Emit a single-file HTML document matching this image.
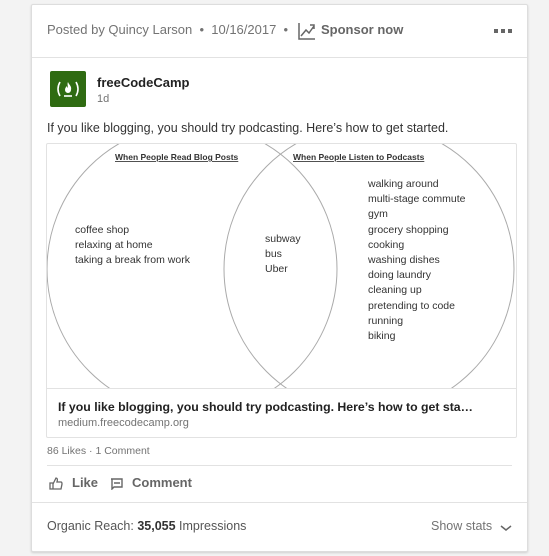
<!DOCTYPE html>
<html><head><style>
body{margin:0;background:#f3f3f3;font-family:"Liberation Sans",sans-serif;width:549px;height:556px;overflow:hidden;position:relative}
.card{position:absolute;left:31px;top:4px;width:497px;height:548px;background:#fff;border:1px solid #ddd;border-radius:2px;box-shadow:0 1px 2px rgba(0,0,0,.15);box-sizing:border-box}
.abs{position:absolute;white-space:nowrap}
.g{color:#737373}
</style></head><body>
<div class="card">
 <div class="abs g" style="left:15px;top:17px;font-size:13px">Posted by Quincy Larson &nbsp;•&nbsp; 10/16/2017 &nbsp;•&nbsp;</div>
 <svg class="abs" style="left:266px;top:17px" width="18" height="18" viewBox="0 0 18 18"><path d="M1 1v16h16M3 14l5-6 3 3 5-7M12 3h4v4" fill="none" stroke="#666" stroke-width="1.5"/></svg>
 <div class="abs" style="left:289px;top:17px;font-size:13px;font-weight:bold;color:#666">Sponsor now</div>
 <div class="abs" style="left:462px;top:24px;line-height:0"><span style="display:inline-block;width:4px;height:4px;background:#666;margin-right:3px"></span><span style="display:inline-block;width:4px;height:4px;background:#666;margin-right:3px"></span><span style="display:inline-block;width:4px;height:4px;background:#666"></span></div>
 <div class="abs" style="left:0;top:52px;width:495px;border-top:1px solid #e2e2e2"></div>
 <div class="abs" style="left:18px;top:66px;width:36px;height:36px;background:#2f6b12;border-radius:2px">
  <svg width="36" height="36" viewBox="0 0 36 36"><g fill="none" stroke="#fff" stroke-width="1.6"><path d="M10 11q-4 7 0 14M26 11q4 7 0 14"/><path d="M14 25h8"/></g><path d="M18 11c1 3 4 4 3 8a3 3 0 0 1-6 0c0-2 1-3 2-4 0 1 1 2 1 2 0-2-1-4 0-6z" fill="#fff"/></svg>
 </div>
 <div class="abs" style="left:65px;top:70px;font-size:13px;font-weight:bold;color:#222">freeCodeCamp</div>
 <div class="abs g" style="left:65px;top:88px;font-size:11px">1d</div>
 <div class="abs" style="left:15px;top:116px;font-size:12.5px;color:#333">If you like blogging, you should try podcasting. Here’s how to get started.</div>
 <div class="abs" style="left:14px;top:138px;width:469px;height:293px;border:1px solid #e2e2e2;border-radius:2px;overflow:hidden">
  <svg width="469" height="245" style="position:absolute;left:0;top:0">
   <circle cx="145" cy="125" r="145" fill="none" stroke="#aaa" stroke-width="1"/>
   <circle cx="322" cy="125" r="145" fill="none" stroke="#aaa" stroke-width="1"/>
   <g font-family="Liberation Sans,sans-serif" font-size="10.5" fill="#333">
   <text x="68" y="16" font-weight="bold" font-size="8.5" text-decoration="underline">When People Read Blog Posts</text>
   <text x="246" y="16" font-weight="bold" font-size="8.5" text-decoration="underline">When People Listen to Podcasts</text>
   <text x="28" y="89">coffee shop</text><text x="28" y="104">relaxing at home</text><text x="28" y="119">taking a break from work</text>
   <text x="218" y="98">subway</text><text x="218" y="113">bus</text><text x="218" y="128">Uber</text>
   <text x="321" y="43">walking around</text><text x="321" y="58">multi-stage commute</text><text x="321" y="73">gym</text><text x="321" y="89">grocery shopping</text><text x="321" y="104">cooking</text><text x="321" y="119">washing dishes</text><text x="321" y="134">doing laundry</text><text x="321" y="149">cleaning up</text><text x="321" y="165">pretending to code</text><text x="321" y="180">running</text><text x="321" y="195">biking</text>
   </g>
  </svg>
  <div class="abs" style="left:0;top:244px;width:469px;border-top:1px solid #e2e2e2"></div>
  <div class="abs" style="left:11px;top:256px;font-size:12.3px;font-weight:bold;color:#222">If you like blogging, you should try podcasting. Here’s how to get sta…</div>
  <div class="abs g" style="left:11px;top:273px;font-size:11px">medium.freecodecamp.org</div>
 </div>
 <div class="abs g" style="left:15px;top:440px;font-size:10.5px">86 Likes · 1 Comment</div>
 <div class="abs" style="left:15px;top:460px;width:465px;border-top:1px solid #e2e2e2"></div>
 <svg class="abs" style="left:17px;top:471px" width="14" height="14" viewBox="0 0 14 14"><path d="M1 7h3v6H1zM4 8l3-6c1 0 2 1 1 4h4c1 0 1 1 1 2l-1 5H4" fill="none" stroke="#666" stroke-width="1.3"/></svg>
 <div class="abs" style="left:40px;top:470px;font-size:13px;font-weight:bold;color:#666">Like</div>
 <svg class="abs" style="left:78px;top:473px" width="13" height="12" viewBox="0 0 13 12"><path d="M1 1h11v8H4l-2 2V1zM4 5h6" fill="none" stroke="#666" stroke-width="1.4"/></svg>
 <div class="abs" style="left:100px;top:470px;font-size:13px;font-weight:bold;color:#666">Comment</div>
 <div class="abs" style="left:0;top:497px;width:495px;border-top:1px solid #e2e2e2"></div>
 <div class="abs" style="left:15px;top:514px;font-size:12.5px;color:#555">Organic Reach: <b style="color:#333">35,055</b> Impressions</div>
 <div class="abs g" style="left:399px;top:514px;font-size:12.5px">Show stats</div>
 <svg class="abs" style="left:468px;top:519px" width="12" height="8"><path d="M1 2l5 4 5-4" fill="none" stroke="#666" stroke-width="1.5"/></svg>
</div>
</body></html>
